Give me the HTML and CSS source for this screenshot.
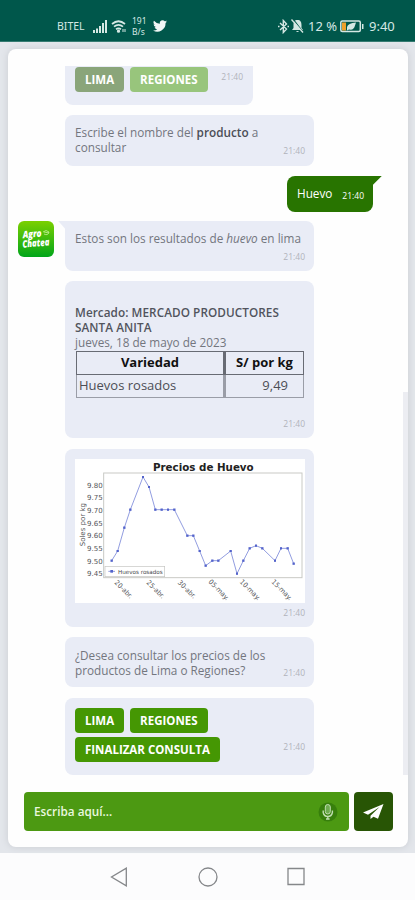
FILE: index.html
```html
<!DOCTYPE html>
<html lang="es">
<head>
<meta charset="utf-8">
<title>AgroChatea</title>
<link rel="stylesheet" href="styles.css">
</head>
<body>
<header class="status">
  <span class="carrier">BITEL</span>
  <svg class="signal" width="15" height="13" viewBox="0 0 15 13" fill="#d5e8e4"><path d="M0 10h2v3H0zM3 8.500h2V13H3zM6 6h2v7H6zM9 3h2v10H9zM12 0h2v13h-2z"/></svg>
  <svg class="wifi" width="16" height="13" viewBox="0 0 16 13" fill="none" stroke="#d5e8e4" stroke-width="1.700"><path d="M1 4Q7.500-1.500 14 4M3 6.700Q7.500 3 12 6.700M5 9.200Q7.500 7.500 10 9.200"/><circle cx="7.500" cy="11.200" r=".8"/><path d="M12 9v3m2-3v3" stroke-width="1"/></svg>
  <span class="rate"><span>191</span><span>B/s</span></span>
  <svg class="bird" width="14" height="12" viewBox="0 0 24 20" fill="#f0f7f6"><path d="M24 2.400a10 10 0 0 1-2.800.8A5 5 0 0 0 23.300.5a10 10 0 0 1-3.100 1.200 4.900 4.900 0 0 0-8.400 4.500A14 14 0 0 1 1.700 1a4.900 4.900 0 0 0 1.500 6.600A5 5 0 0 1 1 7a4.900 4.900 0 0 0 3.900 4.900 5 5 0 0 1-2.200.1 4.900 4.900 0 0 0 4.600 3.400A9.900 9.900 0 0 1 0 17.500 14 14 0 0 0 21.500 5 10 10 0 0 0 24 2.400z"/></svg>
  <span class="grow"></span>
  <svg class="bt" width="11" height="15" viewBox="0 0 11 15" fill="none" stroke="#d5e8e4" stroke-width="1.400"><path d="M2 4l6.500 6L5.300 13.500v-12L8.500 5 2 11M0 7.500h1.500m8 0H11"/></svg>
  <svg class="mute" width="13" height="14" viewBox="0 0 13 14"><path fill="#d5e8e4" d="M6.500 1C9.500 1 10.500 3 10.500 6v3l1.500 2H1l1.500-2V6c0-3 1-5 4-5zM5 12h3q-1.500 2-3 0z"/><path d="M2 0l10 13" stroke="#00574b" stroke-width="1.200"/><path d="M.5.500l11.500 13" stroke="#d5e8e4" stroke-width="1.300"/></svg>
  <span class="percent">12 %</span>
  <svg class="battery" width="24" height="13" viewBox="0 0 24 13"><rect x=".8" y="1" width="19.500" height="10.500" rx="1.500" fill="none" stroke="#d5e8e4" stroke-width="1.500"/><path fill="#f0a029" d="M2 2.500h4v8H2z"/><path fill="#d5e8e4" d="M7 7q1-4 9-4.500l-1 3q-1 5-6 4l-2 1zM22 4h1.500v5H22z"/></svg>
  <span class="clock">9:40</span>
</header>

<main class="app">
  <section class="card">
    <div class="thread">
      <div class="bubble b-first">
        <div class="buttons"><button class="btn used">LIMA</button><button class="btn faded">REGIONES</button></div>
        <time class="time">21:40</time>
      </div>
      <div class="bubble b-ask"><p>Escribe el nombre del <b>producto</b> a<br>consultar</p><time class="time">21:40</time></div>
      <div class="reply"><span>Huevo</span><time>21:40</time></div>
      <div class="row">
        <svg class="avatar" width="36" height="36" viewBox="0 0 36 36"><defs><linearGradient id="g" x2="0" y2="1"><stop stop-color="#7bd000"/><stop offset="1" stop-color="#00a51a"/></linearGradient></defs><rect width="36" height="36" rx="6" fill="url(#g)"/><g class="logo" transform="rotate(-5 18 18)"><text x="5" y="16" textLength="19" lengthAdjust="spacingAndGlyphs">Agro</text><text x="4" y="25.500" textLength="27" lengthAdjust="spacingAndGlyphs">Chatea</text></g><path d="M25 11q3-3 6 0-1 4-5 2m0-2l5 1" fill="none" stroke="#c4f09a" stroke-width=".8"/></svg>
        <div class="bubble b-results"><p>Estos son los resultados de <i>huevo</i> en lima</p><time class="time">21:40</time></div>
      </div>
      <div class="bubble b-table">
        <p class="market">Mercado: MERCADO PRODUCTORES<br>SANTA ANITA</p>
        <p class="date">jueves, 18 de mayo de 2023</p>
        <table class="prices">
          <tr><th class="kind">Variedad</th><th>S/ por kg</th></tr>
          <tr><td>Huevos rosados</td><td class="num">9,49</td></tr>
        </table>
        <time class="time">21:40</time>
      </div>
      <div class="bubble b-chart">
        <svg class="chart" width="230" height="144" viewBox="45 41 690 432">
          <rect x="45" y="41" width="690" height="432" fill="#fff"/>
          <text class="title" x="279" y="77" textLength="302" lengthAdjust="spacingAndGlyphs">Precios de Huevo</text>
          <rect x="131" y="83" width="595" height="314" fill="none" stroke="#c9cac5" stroke-width="3"/>
          <g class="ticks">
            <text x="81" y="127" textLength="47" lengthAdjust="spacingAndGlyphs">9.80</text><text x="81" y="165" textLength="47" lengthAdjust="spacingAndGlyphs">9.75</text><text x="81" y="203" textLength="47" lengthAdjust="spacingAndGlyphs">9.70</text><text x="81" y="241" textLength="47" lengthAdjust="spacingAndGlyphs">9.65</text><text x="81" y="279" textLength="47" lengthAdjust="spacingAndGlyphs">9.60</text><text x="81" y="317" textLength="47" lengthAdjust="spacingAndGlyphs">9.55</text><text x="81" y="355" textLength="47" lengthAdjust="spacingAndGlyphs">9.50</text><text x="81" y="393" textLength="47" lengthAdjust="spacingAndGlyphs">9.45</text>
            <text transform="translate(74 303) rotate(-90)" textLength="130" lengthAdjust="spacingAndGlyphs">Soles por kg</text>
            <text transform="translate(162 413) rotate(45)" textLength="68" lengthAdjust="spacingAndGlyphs">20-abr.</text><text transform="translate(258 413) rotate(45)" textLength="68" lengthAdjust="spacingAndGlyphs">25-abr.</text><text transform="translate(352 413) rotate(45)" textLength="68" lengthAdjust="spacingAndGlyphs">30-abr.</text><text transform="translate(444 411) rotate(45)" textLength="78" lengthAdjust="spacingAndGlyphs">05-may.</text><text transform="translate(538 411) rotate(45)" textLength="78" lengthAdjust="spacingAndGlyphs">10-may.</text><text transform="translate(633 411) rotate(45)" textLength="78" lengthAdjust="spacingAndGlyphs">15-may.</text>
          </g>
          <defs><marker id="dot" markerWidth="8" markerHeight="8" refX="4" refY="4" markerUnits="userSpaceOnUse"><rect x="0.500" y="0.500" width="7" height="7" fill="#5363cb"/></marker></defs>
          <polyline fill="none" stroke="#929de0" stroke-width="3" marker-start="url(#dot)" marker-mid="url(#dot)" marker-end="url(#dot)" points="155,346 173,317 193,247 211,193 249,95 267,125 286,193 305,193 324,193 343,193 382,271 400,271 419,317 437,361 457,346 475,346 512,317 531,385 550,346 569,309 588,301 607,309 645,346 663,309 683,309 701,355"/>
          <rect x="135" y="363" width="179" height="31" fill="#fff" stroke="#c3c4c0" stroke-width="2"/>
          <path d="M145 378h20" stroke="#929de0" stroke-width="3"/><rect x="151" y="374" width="8" height="8" fill="#5363cb"/>
          <text class="legend" x="174" y="385" textLength="134" lengthAdjust="spacingAndGlyphs">Huevos rosados</text>
        </svg>
        <time class="time">21:40</time>
      </div>
      <div class="bubble b-again"><p>¿Desea consultar los precios de los<br>productos de Lima o Regiones?</p><time class="time">21:40</time></div>
      <div class="bubble b-last">
        <div class="buttons wrap"><button class="btn">LIMA</button><button class="btn">REGIONES</button><button class="btn">FINALIZAR CONSULTA</button></div>
        <time class="time">21:40</time>
      </div>
      <span class="scroll"></span>
    </div>
    <div class="composer">
      <div class="field"><span>Escriba aquí...</span>
        <svg width="20" height="20" viewBox="0 0 20 20"><circle cx="10" cy="10" r="9.500" fill="#377f0c"/><rect x="7.300" y="2.500" width="5" height="9.500" rx="2.500" fill="#6eac50" stroke="#c0ddb1"/><path d="M5.200 8.500v2q.8 4 4.600 4t4.600-4v-2M9.800 14.500v2M8 17h3.600" fill="none" stroke="#c0ddb1" stroke-width="1.400"/></svg>
      </div>
      <div class="send"><svg width="21" height="18" viewBox="0 0 21 18"><path fill="#fff" d="M20.500 1L0 9.500l5 2.200L16.500 4 7.500 12.700V16l3-2.300 4.500 2z"/></svg></div>
    </div>
  </section>
</main>

<nav class="nav">
  <svg width="18" height="20" viewBox="0 0 18 20"><path d="M16.300 1.200v17.600L1.500 10z"/></svg>
  <svg width="20" height="20" viewBox="0 0 20 20"><circle cx="10" cy="10" r="9"/></svg>
  <svg width="18" height="19" viewBox="0 0 18 19"><path d="M1 1.500h16v16H1z"/></svg>
</nav>
</body>
</html>
```
FILE: styles.css
```css
* { box-sizing: border-box; }
body { margin: 0; width: 415px; height: 900px; display: flex; flex-direction: column; overflow: hidden; background: #fcfcfd; font-family: "Open Sans", sans-serif; font-size: 11.75px; line-height: 15px; color: #73767e; }
p { margin: 0; white-space: nowrap; }

.status { height: 42px; padding: 11px 19px 0 57px; background: #00574b; border-bottom: 1px solid #347a70; display: flex; align-items: center; color: #d5e8e4; white-space: nowrap; font-family: "Noto Sans", sans-serif; }
.carrier { width: 36px; font-size: 10.5px; }
.signal { margin-right: 3px; }
.rate { display: flex; flex-direction: column; width: 21px; margin-left: 5px; font-size: 8.5px; line-height: 11px; }
.grow { flex: 1; }
.bt { margin-right: 2px; }
.percent { width: 29px; margin: 0 3px 0 4px; font-size: 13px; }
.battery { margin-right: 5px; }
.clock { width: 27px; font-size: 13px; }

.app { height: 811px; padding: 7px 7px 6px 8px; background: #e3e6eb; }
.card { height: 798px; display: flex; flex-direction: column; background: #fefefe; border-radius: 8px; box-shadow: 0 0 6px 1px #cfd2d7; }
.thread { position: relative; height: 726px; padding: 17px 0 0 57px; display: flex; flex-direction: column; align-items: flex-start; }
.scroll { position: absolute; right: 0; top: 343px; width: 5px; height: 383px; background: #ecedf2; }

.bubble { position: relative; width: 249px; padding: 10px; background: #e9ecf6; border-radius: 8px; }
.time { position: absolute; right: 9px; bottom: 9px; font-size: 8.5px; line-height: 13px; color: #b1b3bb; }
.b-first { width: 188px; height: 39px; padding-top: 1px; border-radius: 0 0 8px 8px; }
.b-first .time { bottom: 22px; right: 10px; }
.b-ask { height: 51px; margin-top: 10px; }
.b-ask b { color: #4b4e56; font-weight: 600; }
.reply { align-self: flex-end; position: relative; width: 86px; height: 36px; margin: 10px 35px 9px 0; padding: 0 9px 0 10px; display: flex; align-items: center; justify-content: space-between; border-radius: 8px 0 8px 8px; background: #287400; color: #fff; }
.reply::after { content: ""; position: absolute; left: 85px; top: 0; width: 10px; height: 10px; background: inherit; clip-path: polygon(0 0, 100% 0, 0 100%); }
.reply time { font-size: 8.5px; padding-top: 4px; }
.row { display: flex; margin-left: -47px; gap: 11px; }
.b-results { height: 50px; border-top-left-radius: 0; }
.b-results .time { bottom: 8px; }
.b-results::before { content: ""; position: absolute; left: -7px; top: 0; width: 8px; height: 9px; background: inherit; clip-path: polygon(0 0, 100% 0, 100% 100%); }
.avatar { overflow: visible; }
.logo { fill: #fff; font: italic 800 10px "Open Sans", sans-serif; }
.b-table { height: 157px; margin-top: 10px; padding-top: 24px; }
.b-table .time { bottom: 8px; }
.market { font-weight: 600; color: #51545d; letter-spacing: .06px; }
.prices { width: 228px; margin: 1px 0 0 1px; border-collapse: separate; border-spacing: 0; font-size: 13px; line-height: 19px; color: #4c4e55; }
.prices th { height: 24px; padding: 0; border: 1px solid #686b74; color: #111; font-weight: 700; }
.prices .kind { width: 148px; }
.prices td { height: 23px; padding: 0 2px; border: 1px solid #9a9da7; border-top: 0; }
.prices th + th, .prices td + td { border-left-width: 2px; }
.prices .num { text-align: right; padding-right: 15px; }
.b-chart { height: 179px; margin-top: 11px; }
.b-chart .time { bottom: 8px; }
.chart { display: block; }
.title { font: 700 29px "DejaVu Sans", sans-serif; fill: #222; }
.ticks { font: 21px "DejaVu Sans", sans-serif; fill: #55565a; }
.legend { font: 17px "DejaVu Sans", sans-serif; fill: #44464a; }
.b-again { height: 50px; margin-top: 10px; padding-top: 11px; }
.b-again .time { bottom: 8px; }
.b-last { height: 77px; margin-top: 11px; padding-top: 10px; }
.b-last .time { bottom: 22px; }

.buttons { display: flex; gap: 6px; }
.wrap { flex-wrap: wrap; gap: 4px 6px; }
.btn { height: 25px; padding: 0 10px; border: 0; border-radius: 4px; background: #459703; color: #fff; font: 700 11.5px "Open Sans", sans-serif; white-space: nowrap; }
.used { background: #8aa57a; }
.faded { background: #98c57c; }

.composer { display: flex; gap: 5px; padding: 17px 0 0 16px; }
.field { width: 325px; height: 39px; padding: 0 11px 0 10px; display: flex; align-items: center; justify-content: space-between; border-radius: 4px; background: #4c9912; color: #e9f7df; font-weight: 600; }
.send { width: 39px; height: 39px; display: flex; align-items: center; justify-content: center; border-radius: 4px; background: #285505; }

.nav { height: 47px; padding: 0 110px; display: flex; align-items: center; justify-content: space-between; }
.nav svg { fill: none; stroke: #85878a; stroke-width: 1.300; }
```
